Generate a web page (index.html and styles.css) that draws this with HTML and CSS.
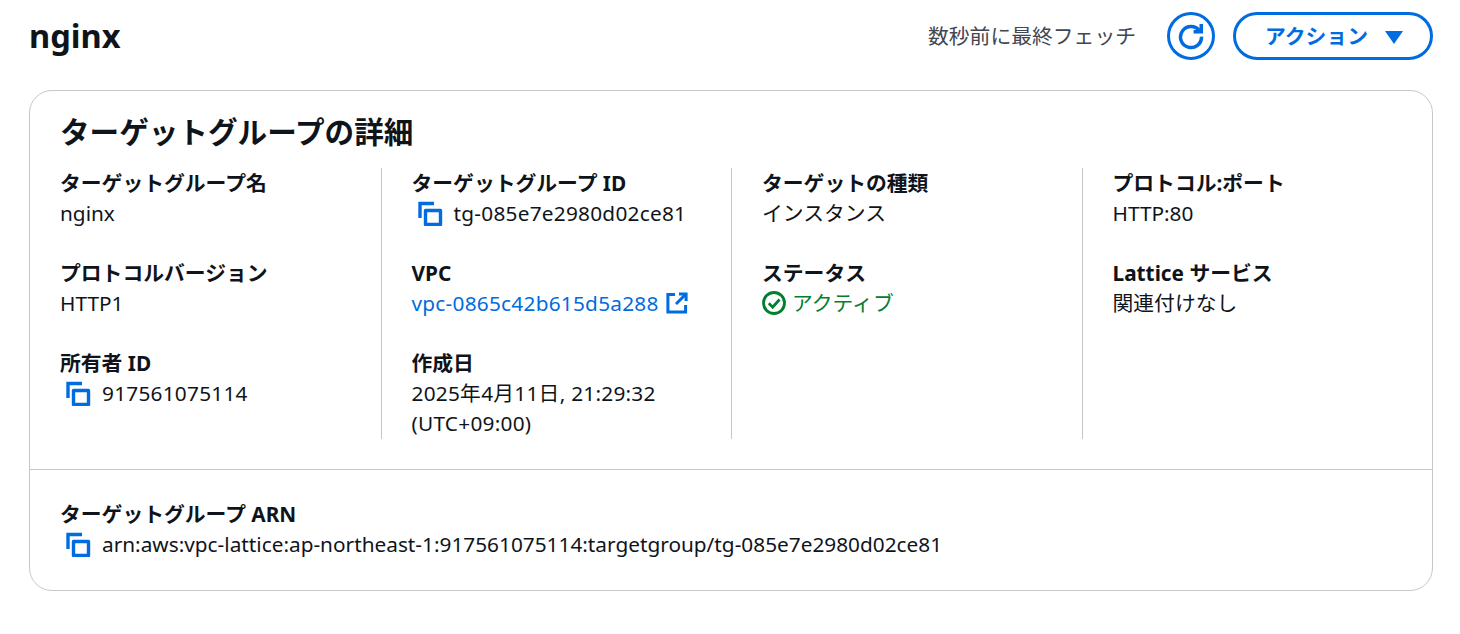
FILE: index.html
```html
<!DOCTYPE html>
<html lang="ja">
<head>
<meta charset="utf-8">
<title>nginx</title>
<link rel="stylesheet" href="styles.css">
</head>
<body>
<header class="top">
  <h1 class="name">nginx</h1>
  <div class="actions">
    <span class="fetched">数秒前に最終フェッチ</span>
    <button class="refresh" aria-label="更新">
      <svg class="refresh-icon" viewBox="0 0 24 24" fill="none" stroke="#006ce0" stroke-width="3">
        <path d="M19.3 7.6A9 9 0 1 0 21 12.5"/>
        <path d="M20.8 1.8V8.4H14.2" stroke-linecap="butt"/>
      </svg>
    </button>
    <button class="action">アクション<span class="caret"></span></button>
  </div>
</header>
<section class="card">
  <h2 class="title">ターゲットグループの詳細</h2>
  <div class="grid">
    <div class="col">
      <div class="item"><div class="label">ターゲットグループ名</div><div class="value">nginx</div></div>
      <div class="item"><div class="label">プロトコルバージョン</div><div class="value">HTTP1</div></div>
      <div class="item"><div class="label">所有者 ID</div><div class="value copy digits"><svg class="copy-icon" viewBox="0 -1 26 26" fill="none" stroke="#006ce0" stroke-width="3.400"><path d="M3 17V2.500H17"/><rect x="8.500" y="9.500" width="15" height="14" stroke-linejoin="round"/></svg>917561075114</div></div>
    </div>
    <div class="col">
      <div class="item"><div class="label">ターゲットグループ ID</div><div class="value copy digits"><svg class="copy-icon" viewBox="0 -1 26 26" fill="none" stroke="#006ce0" stroke-width="3.400"><path d="M3 17V2.500H17"/><rect x="8.500" y="9.500" width="15" height="14" stroke-linejoin="round"/></svg>tg-085e7e2980d02ce81</div></div>
      <div class="item"><div class="label">VPC</div><div class="value digits"><a class="link" href="#">vpc-0865c42b615d5a288</a><svg class="ext-icon" viewBox="0 0 22 22" fill="none" stroke="#006ce0" stroke-width="3"><path d="M9 2.400H1.900V20.100H19.600V13"/><path d="M13 1.900H20.100V9"/><path d="M20 2L10 12"/></svg></div></div>
      <div class="item"><div class="label">作成日</div><div class="value digits">2025年4月11日, 21:29:32<br>(UTC+09:00)</div></div>
    </div>
    <div class="col">
      <div class="item"><div class="label">ターゲットの種類</div><div class="value">インスタンス</div></div>
      <div class="item"><div class="label">ステータス</div><div class="value status"><svg class="ok-icon" viewBox="0 0 24 24" fill="none" stroke="#00802f" stroke-width="2.800"><circle cx="12" cy="12" r="10.500"/><path d="M6.800 12.300L10.700 16.200L17.500 8.500"/></svg>アクティブ</div></div>
    </div>
    <div class="col">
      <div class="item"><div class="label">プロトコル:ポート</div><div class="value">HTTP:80</div></div>
      <div class="item"><div class="label">Lattice サービス</div><div class="value">関連付けなし</div></div>
    </div>
  </div>
  <div class="arn">
    <div class="label">ターゲットグループ ARN</div>
    <div class="value copy"><svg class="copy-icon" viewBox="0 -1 26 26" fill="none" stroke="#006ce0" stroke-width="3.400"><path d="M3 17V2.500H17"/><rect x="8.500" y="9.500" width="15" height="14" stroke-linejoin="round"/></svg>arn:aws:vpc-lattice:ap-northeast-1:917561075114:targetgroup/tg-085e7e2980d02ce81</div>
  </div>
</section>
</body>
</html>
```
FILE: styles.css
```css
* { box-sizing: border-box; }
html, body { margin: 0; padding: 0; background: #fff; }
body {
  padding: 12px 27px 0 29px;
  font-family: "Noto Sans", "Noto Sans CJK JP", sans-serif;
  font-size: 20.8px;
  line-height: 30px;
  color: #0f141a;
}
.top {
  display: flex;
  justify-content: space-between;
  align-items: center;
  height: 48px;
  margin-bottom: 30px;
}
.name { margin: 0; font-size: 32.6px; line-height: 48px; font-weight: 700; }
.actions { display: flex; align-items: center; }
.fetched { color: #424650; margin-right: 31px; }
.refresh {
  width: 48px; height: 48px; padding: 0; margin-right: 18px;
  display: flex; align-items: center; justify-content: center;
  background: #fff; border: 3px solid #006ce0; border-radius: 50%;
}
.refresh-icon { width: 28px; height: 28px; display: block; }
.action {
  display: flex; align-items: center; justify-content: center;
  width: 200px; height: 48px; padding: 0 0 0 2px;
  background: #fff; border: 3px solid #006ce0; border-radius: 24px;
  color: #006ce0; font: 700 20.8px/30px "Noto Sans", "Noto Sans CJK JP", sans-serif;
}
.caret {
  width: 0; height: 0; margin-left: 17px; margin-top: 2px;
  border-left: 9px solid transparent; border-right: 9px solid transparent;
  border-top: 13px solid #006ce0;
}
.card {
  height: 501px;
  border: 1px solid #c6c6cd;
  border-radius: 23px;
  background: #fff;
}
.title { margin: 0; padding: 21px 0 0 30px; font-size: 29.6px; line-height: 40px; height: 77px; font-weight: 700; }
.grid {
  display: grid;
  grid-template-columns: repeat(4, 1fr);
  height: 271px;
}
.col { padding-left: 30px; border-left: 1px solid #c6c6cd; }
.col:first-child { border-left-color: transparent; padding-left: 29px; }
.item { margin-bottom: 30px; }
.item:last-child { margin-bottom: 0; }
.label { font-weight: 700; }
.digits { letter-spacing: .25px; }
.copy { display: flex; align-items: center; }
.copy-icon { width: 26px; height: 26px; margin: 0 11px 0 5px; flex: none; }
.link { color: #006ce0; text-decoration: none; }
.ext-icon { width: 22px; height: 22px; margin-left: 7px; vertical-align: -3px; }
.status { color: #00802f; display: flex; align-items: center; }
.ok-icon { width: 24px; height: 24px; margin-right: 6px; flex: none; }
.arn {
  margin-top: 30px;
  padding: 29px 0 0 30px;
  border-top: 1px solid #c6c6cd;
}
```
